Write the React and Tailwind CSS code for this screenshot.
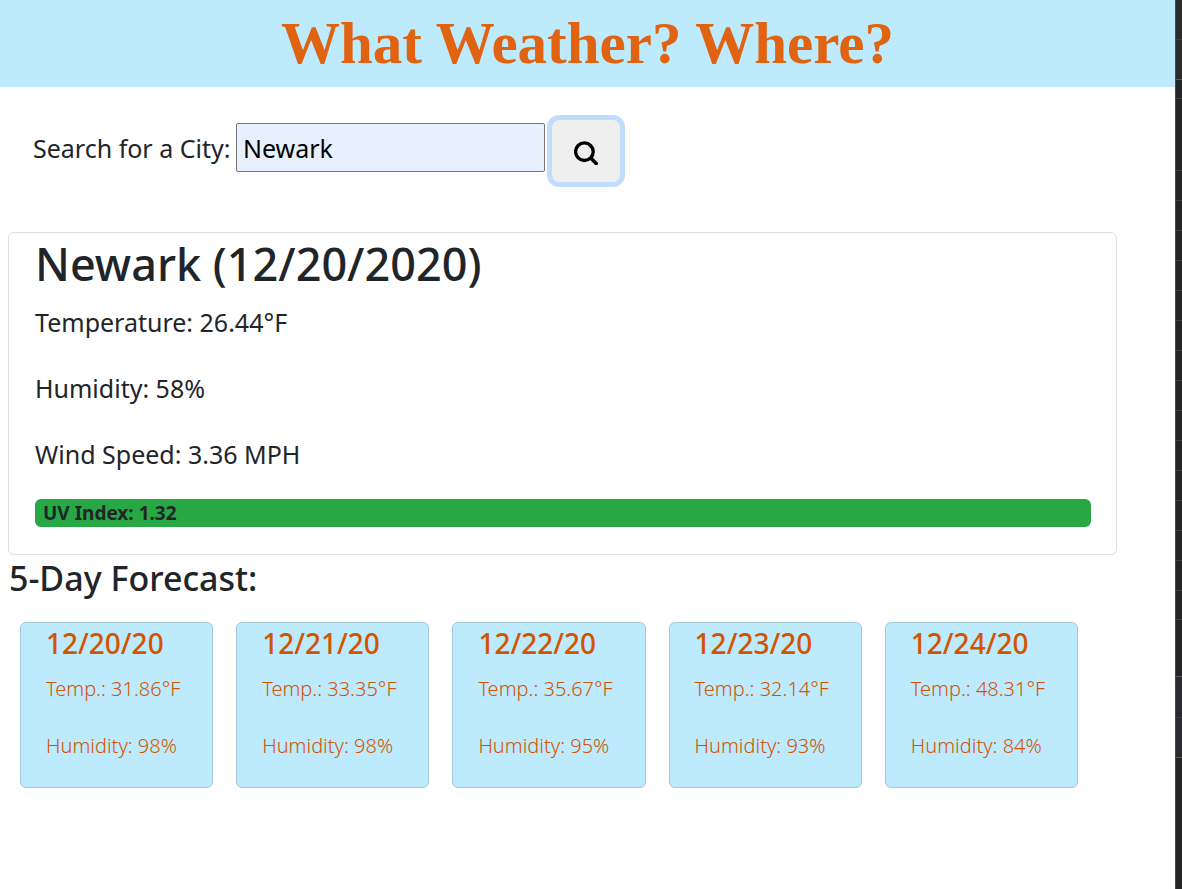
import { useState } from "react";

const days = [
  { date: "12/20/20", temp: "31.86", humidity: 98 },
  { date: "12/21/20", temp: "33.35", humidity: 98 },
  { date: "12/22/20", temp: "35.67", humidity: 95 },
  { date: "12/23/20", temp: "32.14", humidity: 93 },
  { date: "12/24/20", temp: "48.31", humidity: 84 },
];

const railRows = [
  "h-10 border-[#3d3d3d] bg-[#2a2b2e]",
  "h-10 border-[#5a5a5a] bg-[#2a2b2e]",
  "h-[19px] border-[#3d3d3d]",
  "h-[72px] border-[#3d3d3d]",
  ...Array(14).fill("h-[30px] border-[#3d3d3d]"),
  "h-[29px] border-[#3d3d3d]",
  "h-[57px] border-[#5a5a5a]",
  "h-[41px] border-[#3d3d3d] bg-[#292a2f]",
  "h-10 border-[#5a5a5a] bg-[#292a2f]",
];

function DayCard({ date, temp, humidity }) {
  return (
    <article className="h-[166px] rounded-md border border-[#a3c9d9] bg-[#bdeafd] pl-[25px] text-[#d35400]">
      <h3 className="mt-1 text-[28px] leading-[33px] font-medium">{date}</h3>
      <p className="mt-[13px] text-[20px] leading-8 font-light">Temp.: {temp}°F</p>
      <p className="mt-[25px] text-[20px] leading-8 font-light">Humidity: {humidity}%</p>
    </article>
  );
}

export default function App() {
  const [city, setCity] = useState("Newark");
  return (
    <div className="flex min-h-screen bg-white font-['Noto_Sans','Open_Sans',sans-serif] text-[#212529]">
      <main className="min-w-0 flex-1">
        <header className="h-[87px] bg-[#bdeafd] text-center">
          <h1 className="font-['Liberation_Serif',serif] text-[59px] leading-[87px] font-bold text-[#e06311]">
            What Weather? Where?
          </h1>
        </header>
        <form className="flex items-start pt-7 pl-[33px]" onSubmit={(e) => e.preventDefault()}>
          <label htmlFor="city" className="mt-2 w-[203px] text-[25px] leading-[51px] whitespace-nowrap">
            Search for a City:
          </label>
          <input
            id="city"
            value={city}
            onChange={(e) => setCity(e.target.value)}
            className="mt-2 h-[49px] w-[309px] rounded-xs border border-[#767676] bg-[#e8f0fe] px-1.5 text-[25px] text-black outline-none"
          />
          <button
            aria-label="Search"
            className="ml-0.5 flex h-[72px] w-[78px] items-center justify-center rounded-xl border-[5px] border-[#bfdeff] bg-[#efefef] text-black"
          >
            <svg viewBox="0 0 24 24" className="mt-1 size-6" fill="none" stroke="currentColor" aria-hidden="true">
              <circle cx="10.4" cy="10.7" r="8.8" strokeWidth="3.3" />
              <path d="M17 17.3 22.2 22.5" strokeWidth="3.6" strokeLinecap="round" />
            </svg>
          </button>
        </form>
        <section className="mt-[45px] mr-[58px] ml-2 h-[323px] rounded-md border border-[#dfdfdf] pr-[25px] pl-[26px]">
          <h2 className="mt-1 text-[45px] leading-[53px] font-medium">Newark (12/20/2020)</h2>
          <p className="mt-3 text-[25px] leading-10">Temperature: 26.44°F</p>
          <p className="mt-[26px] text-[25px] leading-10">Humidity: 58%</p>
          <p className="mt-[26px] text-[25px] leading-10">Wind Speed: 3.36 MPH</p>
          <p className="mt-[25px] rounded-md bg-[#28a745] px-2 text-[19px] leading-7 font-bold">UV Index: 1.32</p>
        </section>
        <section>
          <h2 className="ml-[9px] text-[34px] leading-[46px] font-medium">5-Day Forecast:</h2>
          <div className="mt-[21px] mr-[97px] ml-5 grid grid-cols-5 gap-[23px]">
            {days.map((d) => (
              <DayCard key={d.date} {...d} />
            ))}
          </div>
        </section>
      </main>
      <aside className="w-[7px] shrink-0 border-l border-[#4a4a4a] bg-[#242424]">
        {railRows.map((row, i) => (
          <div key={i} className={`border-b ${row}`} />
        ))}
      </aside>
    </div>
  );
}
